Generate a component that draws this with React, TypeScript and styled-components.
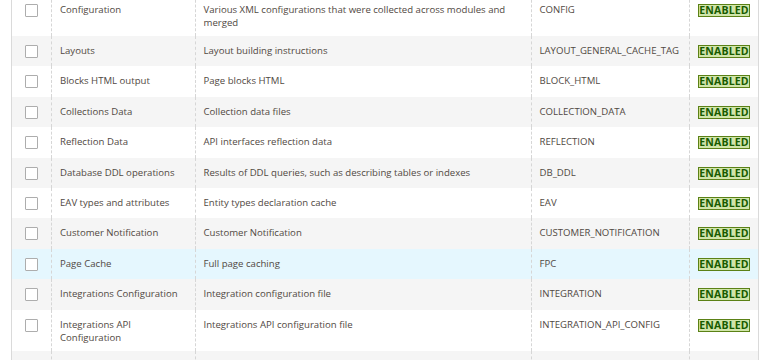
import React from 'react';
import styled, { createGlobalStyle } from 'styled-components';

type CacheRow = {
  name: string;
  description: string;
  tag: string;
  active?: boolean;
};

const rows: CacheRow[] = [
  {
    name: 'Configuration',
    description:
      'Various XML configurations that were collected across modules and merged',
    tag: 'CONFIG'
  },
  { name: 'Layouts', description: 'Layout building instructions', tag: 'LAYOUT_GENERAL_CACHE_TAG' },
  { name: 'Blocks HTML output', description: 'Page blocks HTML', tag: 'BLOCK_HTML' },
  { name: 'Collections Data', description: 'Collection data files', tag: 'COLLECTION_DATA' },
  { name: 'Reflection Data', description: 'API interfaces reflection data', tag: 'REFLECTION' },
  {
    name: 'Database DDL operations',
    description: 'Results of DDL queries, such as describing tables or indexes',
    tag: 'DB_DDL'
  },
  { name: 'EAV types and attributes', description: 'Entity types declaration cache', tag: 'EAV' },
  { name: 'Customer Notification', description: 'Customer Notification', tag: 'CUSTOMER_NOTIFICATION' },
  { name: 'Page Cache', description: 'Full page caching', tag: 'FPC', active: true },
  { name: 'Integrations Configuration', description: 'Integration configuration file', tag: 'INTEGRATION' },
  {
    name: 'Integrations API Configuration',
    description: 'Integrations API configuration file',
    tag: 'INTEGRATION_API_CONFIG'
  },
  {
    name: 'Web Services Configuration',
    description: 'REST and SOAP configurations, generated WSDL file',
    tag: 'WEBSERVICE'
  }
];

const GlobalStyle = createGlobalStyle`
  html, body {
    margin: 0;
    padding: 0;
    background: #ffffff;
    overflow: hidden;
  }
  body {
    font-family: 'Open Sans', 'Liberation Sans', sans-serif;
    width: 770px;
    height: 360px;
  }
`;

const Wrapper = styled.div`
  margin: -5.5px 12px 0 11px;
`;

const Grid = styled.table`
  width: 747px;
  table-layout: fixed;
  border-collapse: collapse;
  border-left: 1px solid #dadada;
  border-right: 1px solid #dadada;
`;

const Row = styled.tr<{ $striped: boolean; $active?: boolean }>`
  height: 30.4px;
  background: ${({ $striped, $active }) =>
    $active ? '#e5f7fe' : $striped ? '#f5f5f5' : '#ffffff'};
`;

const Cell = styled.td`
  padding: 8px 8px 7.5px;
  vertical-align: top;
  font-size: 9.6px;
  line-height: 13px;
  color: #514943;
  border-left: 1px dashed #d6d6d6;
  border-right: 1px dashed #d6d6d6;
  word-wrap: break-word;
`;

const CheckCell = styled(Cell)`
  padding: 9px 0 0;
  text-align: center;
`;

const Checkbox = styled.span`
  display: inline-block;
  width: 11px;
  height: 11px;
  border: 1px solid #adadad;
  border-radius: 1px;
  background: #ffffff;
  vertical-align: top;
`;

const Badge = styled.span`
  display: block;
  margin-top: 1px;
  border: 1px solid #5b8116;
  background: #d0e5a9;
  color: #185b00;
  font-size: 10.5px;
  font-weight: 700;
  line-height: 11px;
  text-align: center;
  text-transform: uppercase;
  letter-spacing: 0.2px;
`;

const App: React.FunctionComponent = () => (
  <>
    <GlobalStyle />
    <Wrapper>
      <Grid>
        <colgroup>
          <col style={{ width: 40 }} />
          <col style={{ width: 143.5 }} />
          <col style={{ width: 336 }} />
          <col style={{ width: 158.5 }} />
          <col style={{ width: 69 }} />
        </colgroup>
        <tbody>
          {rows.map((row, i) => (
            <Row key={row.tag} $striped={i % 2 === 1} $active={row.active}>
              <CheckCell>
                <Checkbox />
              </CheckCell>
              <Cell>{row.name}</Cell>
              <Cell>{row.description}</Cell>
              <Cell>{row.tag}</Cell>
              <Cell>
                <Badge>Enabled</Badge>
              </Cell>
            </Row>
          ))}
        </tbody>
      </Grid>
    </Wrapper>
  </>
);

export default App;
